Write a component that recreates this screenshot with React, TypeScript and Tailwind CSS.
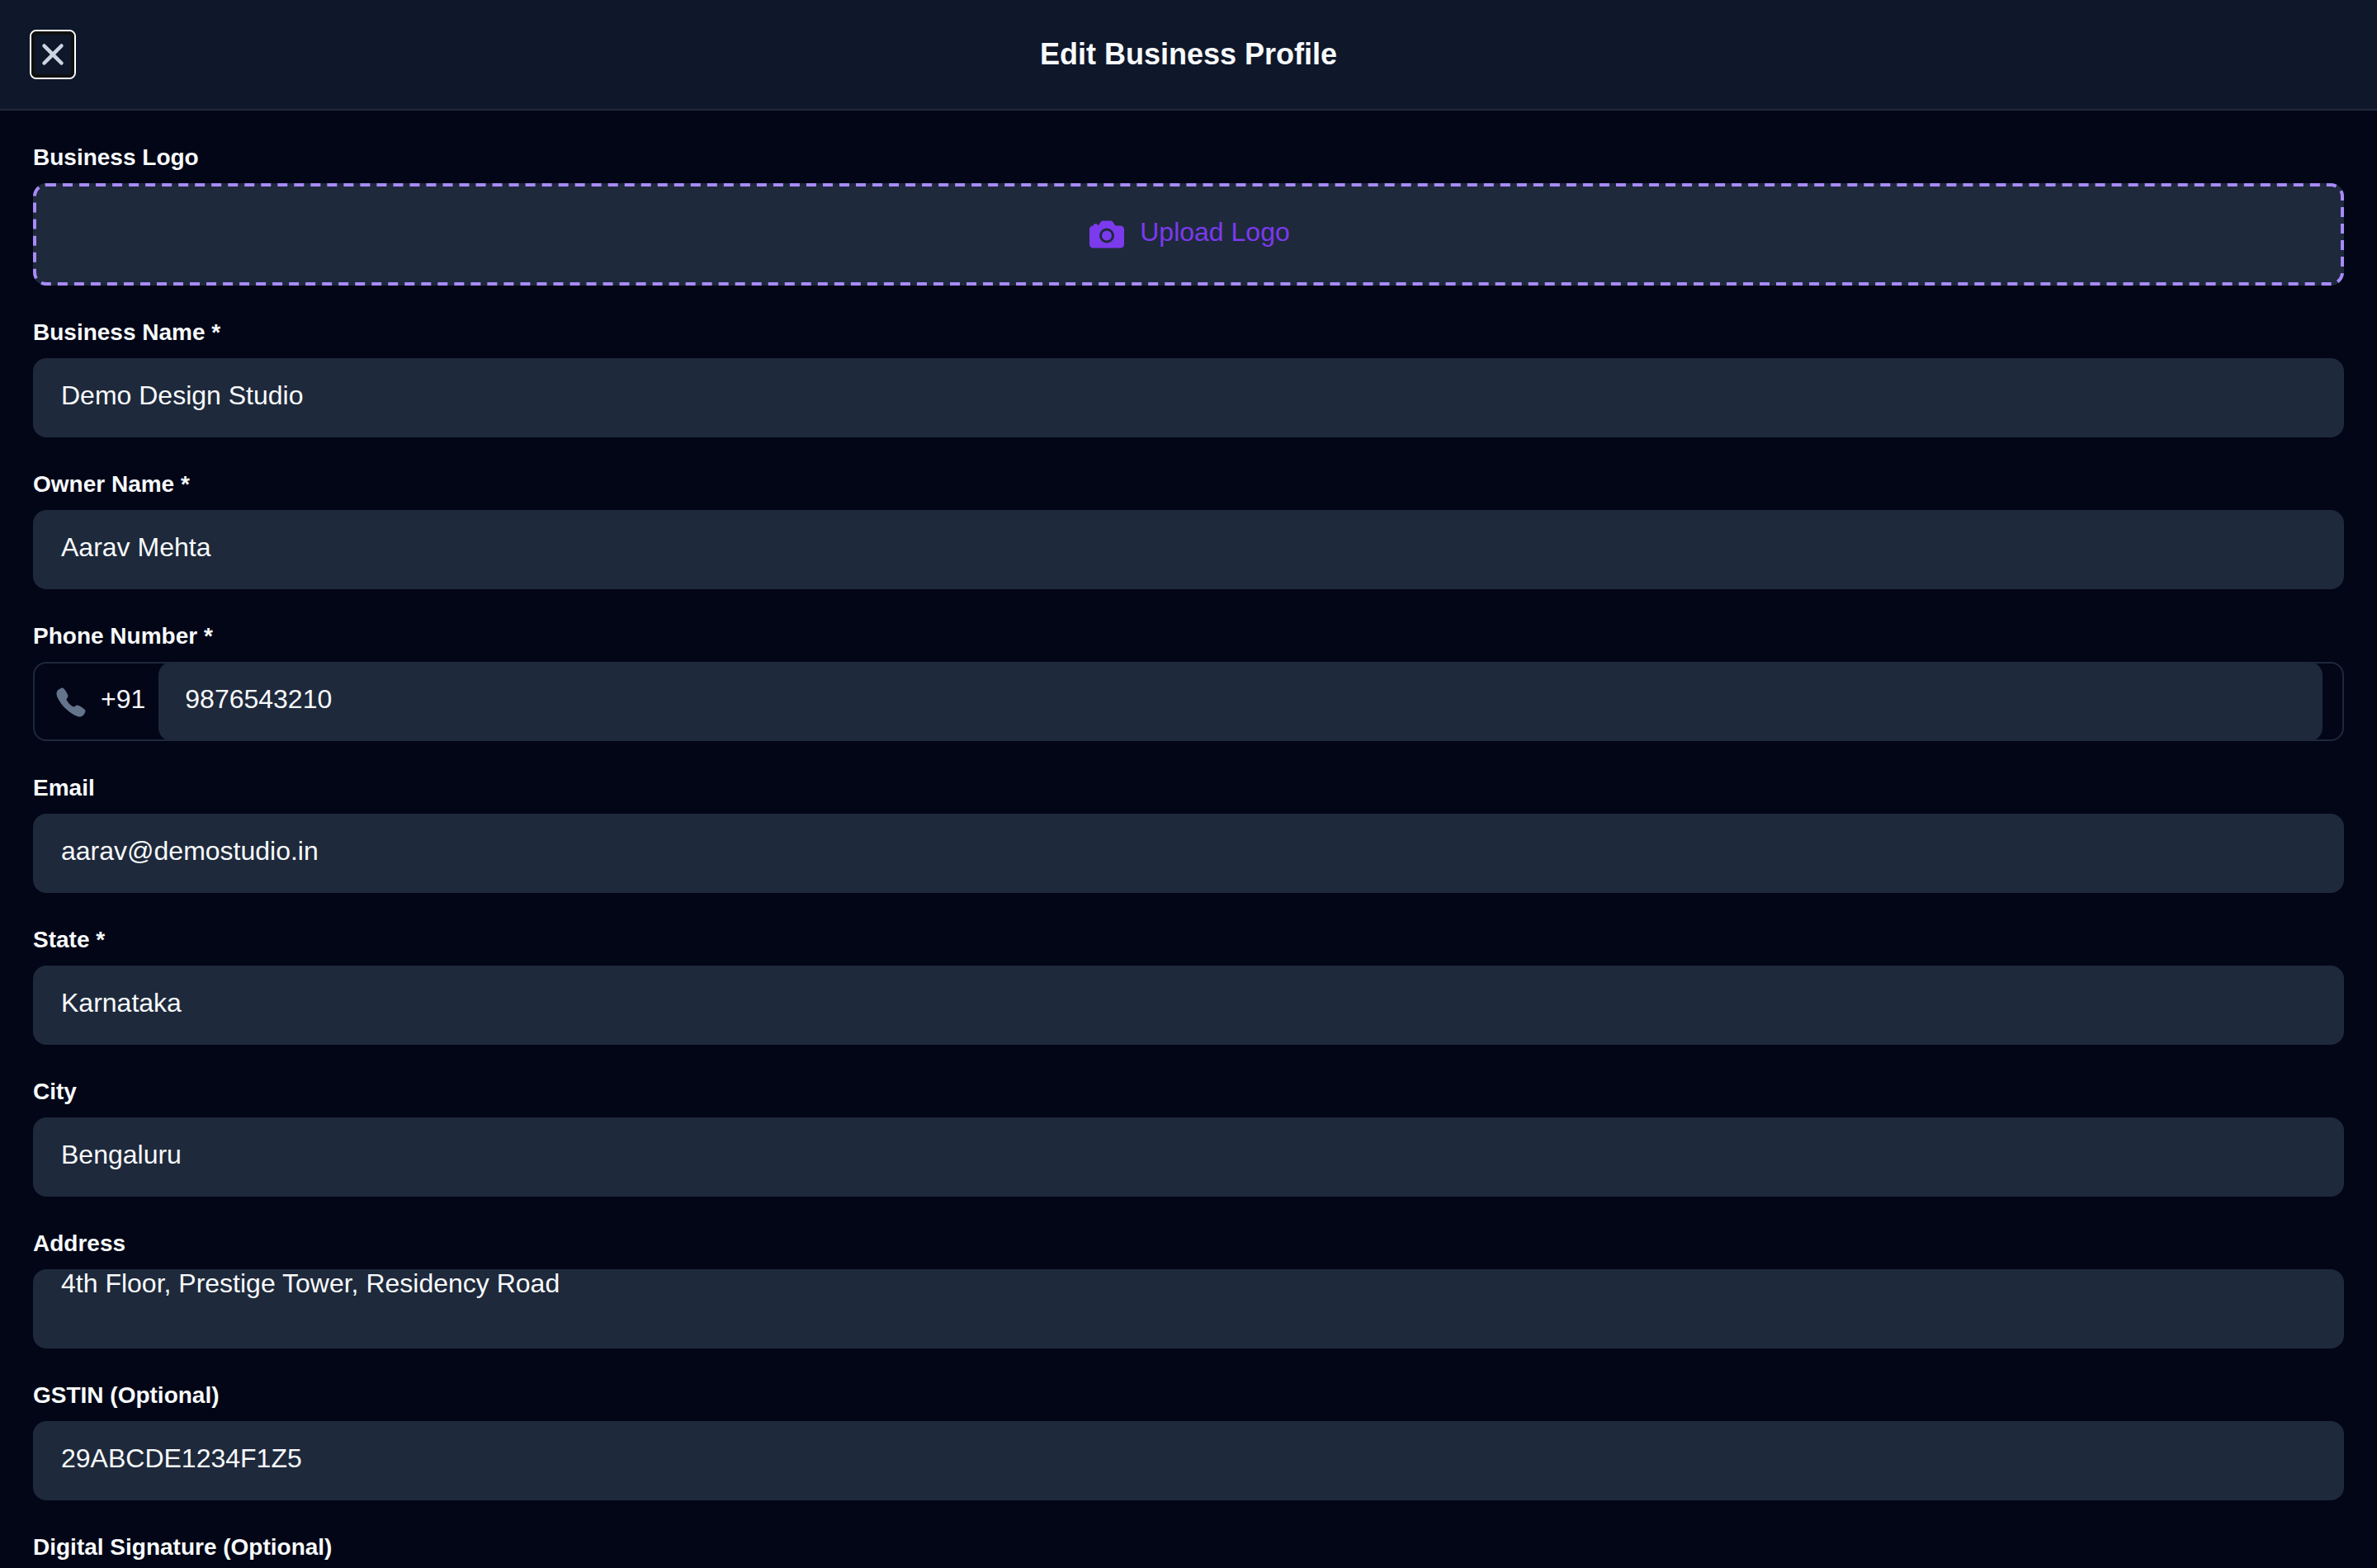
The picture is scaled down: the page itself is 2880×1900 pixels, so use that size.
import React from "react";
import { IoCall, IoCamera, IoClose } from "react-icons/io5";

const Label = ({ text }: { text: string }) => (
	<label className="block pt-px text-[28px] leading-[31px] font-bold text-[#f8fafc] mb-4">{text}</label>
);

const Field = ({ label, value, multiline }: { label: string; value: string; multiline?: boolean }) => {
	return (
		<div className="mb-10">
			<Label text={label} />
			<div
				className={
					multiline
						? "h-24 rounded-2xl bg-[#1e293b] px-[34px] text-[32px] leading-[34px] text-[#f8fafc]"
						: "h-24 rounded-2xl bg-[#1e293b] px-[34px] pt-[27px] text-[32px] leading-9 text-[#f8fafc]"
				}
			>
				{value}
			</div>
		</div>
	);
};

const PhoneField = () => {
	return (
		<div className="mb-10">
			<Label text="Phone Number *" />
			<div className="flex h-24 rounded-2xl border-2 border-[#1e293b] px-6 text-[32px] leading-9 text-[#f8fafc]">
				<IoCall className="mt-[27px] size-10 shrink-0 text-[#64748b]" />
				<span className="mx-4 pt-[25px]">+91</span>
				<div className="-my-0.5 flex-1 rounded-2xl bg-[#1e293b] px-8 pt-[27px]">9876543210</div>
			</div>
		</div>
	);
};

const App = () => {
	return (
		<div className="h-[1900px] w-full overflow-hidden bg-[#020617] font-['Liberation_Sans',Arial,sans-serif]">
			<header className="grid h-[134px] grid-cols-[56px_1fr_56px] items-center border-b-2 border-[#1e293b] bg-[#0f172a] px-9">
				<button className="flex h-[60px] w-14 items-center justify-center rounded-lg border-2 border-white">
					<span className="flex h-14 w-[52px] items-center justify-center rounded-md border-4 border-[#101010] text-[#cbd5e1]">
						<IoClose className="size-12 shrink-0" />
					</span>
				</button>
				<h1 className="text-center text-[36px] leading-[42px] font-bold text-[#f8fafc]">Edit Business Profile</h1>
			</header>
			<main className="px-10 pt-10">
				<div className="mb-10">
					<Label text="Business Logo" />
					<div className="relative flex h-[124px] justify-center rounded-2xl bg-[#1e293b] text-[#7c3aed]">
						{/* drawn at half size and scaled up so the dashes stay long */}
						<div className="absolute top-0 left-0 h-1/2 w-1/2 origin-top-left scale-200 rounded-lg border-2 border-dashed border-[#a78bfa]" />
						<IoCamera className="mt-[38px] size-12" />
						<span className="ml-4 pt-[41px] text-[32px] leading-9">Upload Logo</span>
					</div>
				</div>
				<Field label="Business Name *" value="Demo Design Studio" />
				<Field label="Owner Name *" value="Aarav Mehta" />
				<PhoneField />
				<Field label="Email" value="aarav@demostudio.in" />
				<Field label="State *" value="Karnataka" />
				<Field label="City" value="Bengaluru" />
				<Field label="Address" value="4th Floor, Prestige Tower, Residency Road" multiline />
				<Field label="GSTIN (Optional)" value="29ABCDE1234F1Z5" />
				<Label text="Digital Signature (Optional)" />
			</main>
		</div>
	);
};

export default App;
